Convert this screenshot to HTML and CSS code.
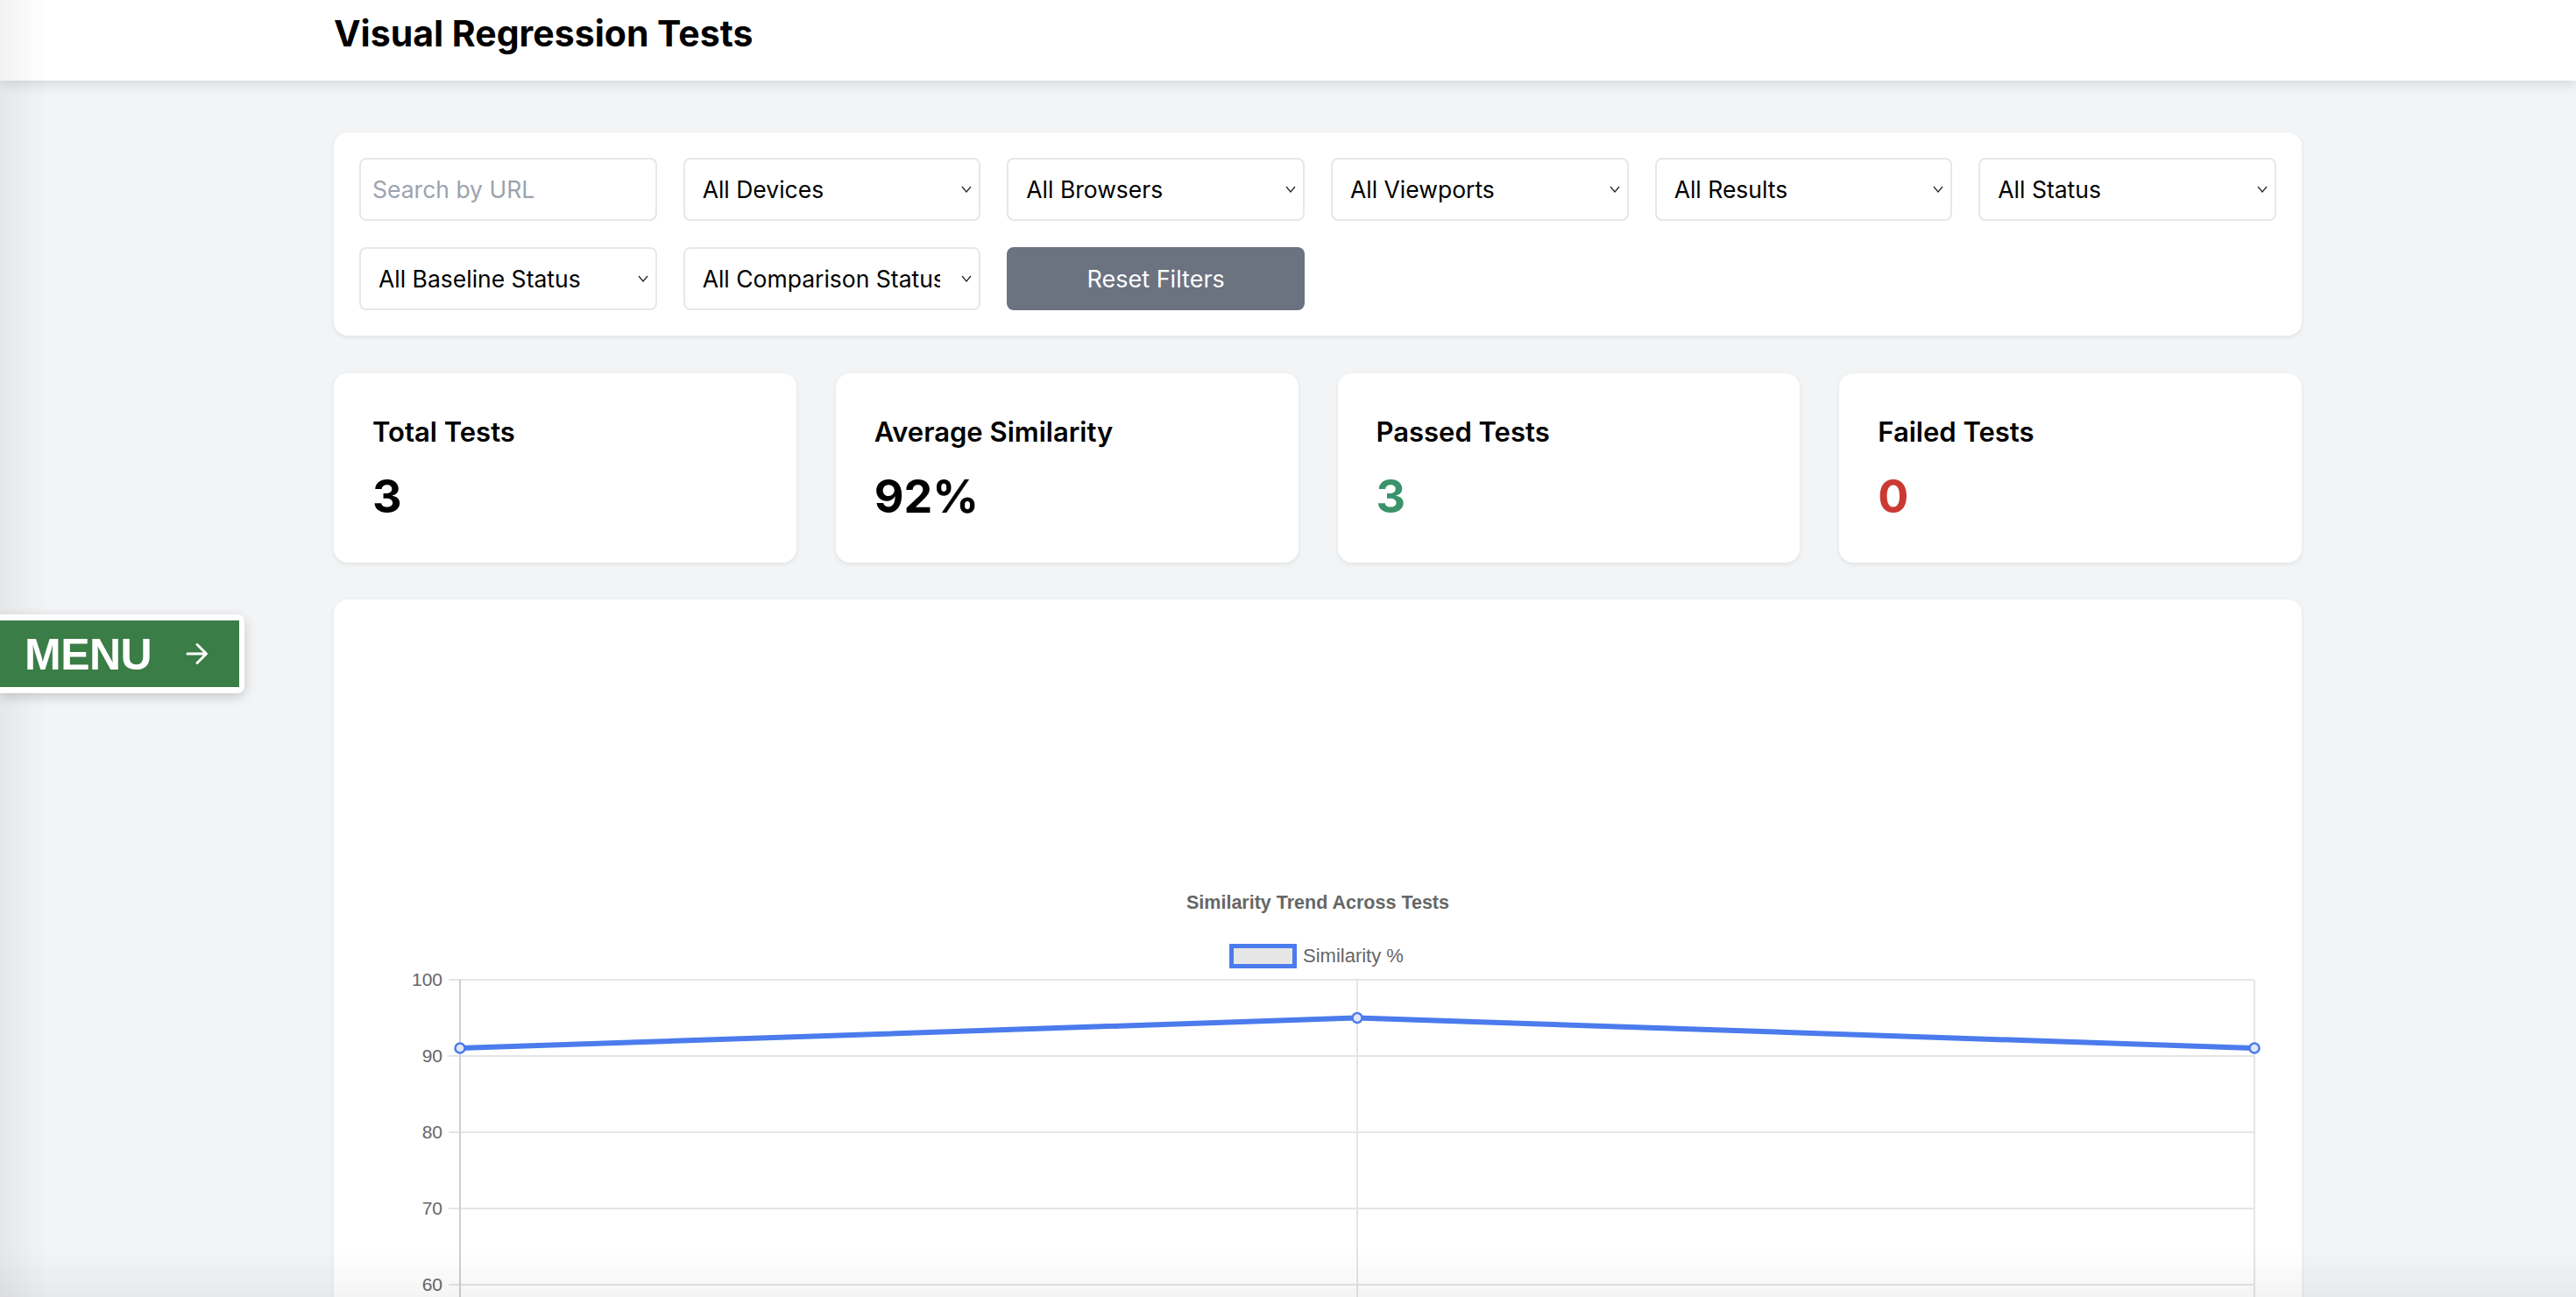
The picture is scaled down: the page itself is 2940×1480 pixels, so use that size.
FILE: index.html
```html
<!DOCTYPE html>
<html lang="en">
<head>
<meta charset="utf-8">
<title>Visual Regression Tests</title>
<link rel="stylesheet" href="styles.css">
</head>
<body>
<header class="topbar">
  <div class="container">
    <h1 class="title">Visual Regression Tests</h1>
  </div>
</header>

<main class="container main">
  <section class="card filters">
    <input class="control search" type="text" placeholder="Search by URL">
    <div class="select-wrap">
      <select class="control"><option>All Devices</option></select>
      <svg class="chev" viewBox="0 0 12 8"><path d="M1 1l5 6 5-6"/></svg>
    </div>
    <div class="select-wrap">
      <select class="control"><option>All Browsers</option></select>
      <svg class="chev" viewBox="0 0 12 8"><path d="M1 1l5 6 5-6"/></svg>
    </div>
    <div class="select-wrap">
      <select class="control"><option>All Viewports</option></select>
      <svg class="chev" viewBox="0 0 12 8"><path d="M1 1l5 6 5-6"/></svg>
    </div>
    <div class="select-wrap">
      <select class="control"><option>All Results</option></select>
      <svg class="chev" viewBox="0 0 12 8"><path d="M1 1l5 6 5-6"/></svg>
    </div>
    <div class="select-wrap">
      <select class="control"><option>All Status</option></select>
      <svg class="chev" viewBox="0 0 12 8"><path d="M1 1l5 6 5-6"/></svg>
    </div>
    <div class="select-wrap">
      <select class="control"><option>All Baseline Status</option></select>
      <svg class="chev" viewBox="0 0 12 8"><path d="M1 1l5 6 5-6"/></svg>
    </div>
    <div class="select-wrap">
      <select class="control"><option>All Comparison Status</option></select>
      <svg class="chev" viewBox="0 0 12 8"><path d="M1 1l5 6 5-6"/></svg>
    </div>
    <button class="reset" type="button">Reset Filters</button>
  </section>

  <section class="stats">
    <div class="card stat">
      <h3 class="stat-label">Total Tests</h3>
      <p class="stat-value">3</p>
    </div>
    <div class="card stat">
      <h3 class="stat-label">Average Similarity</h3>
      <p class="stat-value">92%</p>
    </div>
    <div class="card stat">
      <h3 class="stat-label">Passed Tests</h3>
      <p class="stat-value pass">3</p>
    </div>
    <div class="card stat">
      <h3 class="stat-label">Failed Tests</h3>
      <p class="stat-value fail">0</p>
    </div>
  </section>

  <section class="card chart-card">
    <svg class="chart" width="2158" height="820" viewBox="0 0 2158 820">
      <text class="chart-title" x="1079" y="309" text-anchor="middle">Similarity Trend Across Tests</text>
      <rect x="980.5" y="351.5" width="72" height="23" fill="#e6e6e6" stroke="#4b7bec" stroke-width="5"/>
      <text class="chart-text legend-text" x="1062" y="370">Similarity %</text>

      <g stroke="#e5e5e5" stroke-width="2">
        <line x1="87" y1="390" x2="2148" y2="390"/>
        <line x1="87" y1="477" x2="2148" y2="477"/>
        <line x1="87" y1="564" x2="2148" y2="564"/>
        <line x1="87" y1="651" x2="2148" y2="651"/>
        <line x1="87" y1="738" x2="2148" y2="738"/>
        <line x1="1124" y1="390" x2="1124" y2="820"/>
        <line x1="2148" y1="390" x2="2148" y2="820"/>
      </g>
      <line x1="100" y1="390" x2="100" y2="820" stroke="#cfcfcf" stroke-width="2"/>

      <g class="chart-text" text-anchor="end">
        <text x="80" y="397">100</text>
        <text x="80" y="484">90</text>
        <text x="80" y="571">80</text>
        <text x="80" y="658">70</text>
        <text x="80" y="745">60</text>
      </g>

      <polyline points="100,468 1124,433.5 2148,468" fill="none" stroke="#4b7bec" stroke-width="6" stroke-linejoin="round"/>
      <g fill="#dfe6f7" stroke="#4b7bec" stroke-width="2.5">
        <circle cx="100" cy="468" r="5.5"/>
        <circle cx="1124" cy="433.5" r="5.5"/>
        <circle cx="2148" cy="468" r="5.5"/>
      </g>
    </svg>
  </section>
</main>

<div class="edge-shade"></div>
<div class="bottom-fade"></div>

<a class="menu-btn" href="#">
  <span class="menu-inner">
    <span class="menu-text">MENU</span>
    <svg class="menu-arrow" viewBox="0 0 28 28"><path d="M3 14h21M14 3.5L24.5 14 14 24.5"/></svg>
  </span>
</a>
</body>
</html>
```

FILE: styles.css
```css
* { box-sizing: border-box; }

html, body {
  margin: 0;
  padding: 0;
}

body {
  background: #f3f4f6;
  font-family: Inter, "Noto Sans", "Liberation Sans", sans-serif;
  color: #000;
  overflow: hidden;
  height: 1480px;
}

.container {
  width: 2246px;
  margin-left: 381px;
}

.topbar {
  background: #fff;
  height: 92px;
  box-shadow: 0 4px 14px rgba(0, 0, 0, 0.12);
  position: relative;
  z-index: 2;
}

.title {
  margin: 0;
  padding-top: 13px;
  font-size: 41px;
  line-height: 50px;
  font-weight: 700;
  letter-spacing: 0;
}

.main {
  padding-top: 59px;
}

.card {
  background: #fff;
  border-radius: 16px;
  box-shadow: 0 2px 5px rgba(0, 0, 0, 0.08);
}

.filters {
  display: grid;
  grid-template-columns: repeat(6, 1fr);
  grid-auto-rows: 72px;
  gap: 30px;
  padding: 29px;
}

.control {
  width: 100%;
  height: 72px;
  border: 2px solid #e5e7eb;
  border-radius: 8px;
  background: #fff;
  font-family: Inter, "Noto Sans", sans-serif;
  font-size: 26.5px;
  color: #000;
  outline: none;
  margin: 0;
}

.search {
  padding: 0 13px;
}

.search::placeholder {
  color: #9ca3af;
}

.select-wrap {
  position: relative;
}

.select-wrap select {
  -webkit-appearance: none;
  appearance: none;
  padding: 0 44px 0 20px;
  white-space: nowrap;
  overflow: hidden;
  text-overflow: clip;
}

.chev {
  position: absolute;
  right: 10px;
  top: 32px;
  width: 12px;
  height: 8px;
  fill: none;
  stroke: #222;
  stroke-width: 1.2;
  pointer-events: none;
}

.reset {
  height: 72px;
  border: none;
  border-radius: 8px;
  background: #6b7280;
  color: #fff;
  font-family: Inter, "Noto Sans", sans-serif;
  font-size: 27px;
}

.stats {
  display: grid;
  grid-template-columns: repeat(4, 1fr);
  gap: 45px;
  margin-top: 43px;
}

.stat {
  height: 216px;
  padding: 44px;
}

.stat-label {
  margin: 0;
  font-size: 31px;
  line-height: 45px;
  font-weight: 600;
  letter-spacing: 0;
}

.stat-value {
  margin: 21px 0 0;
  font-size: 52px;
  line-height: 62px;
  font-weight: 700;
}

.pass { color: #3b936b; }
.fail { color: #c93a33; }

.chart-card {
  margin-top: 42px;
  padding: 44px;
  height: 900px;
}

.chart {
  display: block;
}

.chart-title {
  font-family: "Liberation Sans", Arial, sans-serif;
  font-size: 21.5px;
  font-weight: 700;
  fill: #666;
}

.chart-text {
  font-family: "Liberation Sans", Arial, sans-serif;
  font-size: 21px;
  fill: #666;
}

.legend-text {
  font-size: 22px;
}

.edge-shade {
  position: fixed;
  left: 0;
  top: 0;
  width: 54px;
  height: 100%;
  background: linear-gradient(to right, rgba(0, 0, 0, 0.05), rgba(0, 0, 0, 0));
  pointer-events: none;
  z-index: 3;
}

.bottom-fade {
  position: fixed;
  left: 0;
  bottom: 0;
  width: 100%;
  height: 55px;
  background: linear-gradient(to bottom, rgba(0, 0, 0, 0), rgba(0, 0, 0, 0.045));
  pointer-events: none;
  z-index: 3;
}

.menu-btn {
  position: fixed;
  left: 0;
  top: 701px;
  padding: 7px 6px 7px 0;
  background: #fff;
  border-radius: 0 8px 8px 0;
  box-shadow: 0 4px 14px rgba(0, 0, 0, 0.18);
  text-decoration: none;
  z-index: 4;
}

.menu-inner {
  display: flex;
  align-items: center;
  width: 273px;
  height: 76px;
  padding-left: 28px;
  background: #3a7d46;
}

.menu-text {
  font-family: "Liberation Sans", Arial, sans-serif;
  font-weight: 700;
  font-size: 50px;
  line-height: 1;
  color: #fff;
  letter-spacing: -0.5px;
  padding-top: 2px;
}

.menu-arrow {
  width: 28px;
  height: 28px;
  margin-left: 38px;
  fill: none;
  stroke: #fff;
  stroke-width: 3;
  stroke-linecap: round;
  stroke-linejoin: round;
}
```
